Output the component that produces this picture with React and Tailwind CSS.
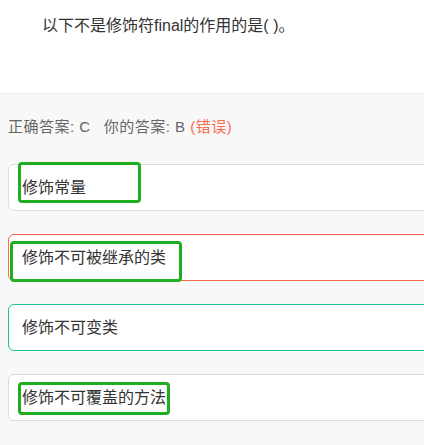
const options = [
  { text: "修饰常量", border: "border-[#dcdcdc]", mark: "left-[9px] top-[-3px] w-[123px] h-[41px]" },
  { text: "修饰不可被继承的类", border: "border-[#f86a4e]", mark: "left-[1px] top-[6px] w-[172px] h-[41px]" },
  { text: "修饰不可变类", border: "border-[#1dbf98]", mark: null },
  { text: "修饰不可覆盖的方法", border: "border-[#dcdcdc]", mark: "left-[9px] top-[7px] w-[152px] h-[33px]" },
];

const App = () => {
  return (
    <div
      className="w-[424px] h-[445px] overflow-hidden bg-[#f8f8f8] text-[#333]"
      style={{ fontFamily: '"Liberation Sans", "Noto Sans CJK SC", sans-serif' }}
    >
      <section className="h-[94px] bg-white border-b border-[#ececec] pl-[42px] pt-[14px]">
        <p className="text-[16px] leading-6">以下不是修饰符final的作用的是( )。</p>
      </section>

      <section className="pl-2 pt-[23px]">
        <p className="text-[15px] leading-5 tracking-[0.5px] text-[#666]">
          正确答案: C
          <span className="ml-[13px]">你的答案: B</span>{" "}
          <span className="text-[#fa6b50]">(错误)</span>
        </p>

        <div className="mt-[27px] flex flex-col gap-[23px]">
          {options.map((opt) => (
            <div
              key={opt.text}
              className={`relative h-[47px] mr-[-20px] flex items-center pl-[13px] bg-white border rounded-md ${opt.border}`}
            >
              <span className="text-[16px] leading-6">{opt.text}</span>
              {opt.mark && (
                <div
                  className={`absolute border-[3px] border-[#1fae1f] rounded-[4px] ${opt.mark}`}
                />
              )}
            </div>
          ))}
        </div>
      </section>
    </div>
  );
};

export default App;
